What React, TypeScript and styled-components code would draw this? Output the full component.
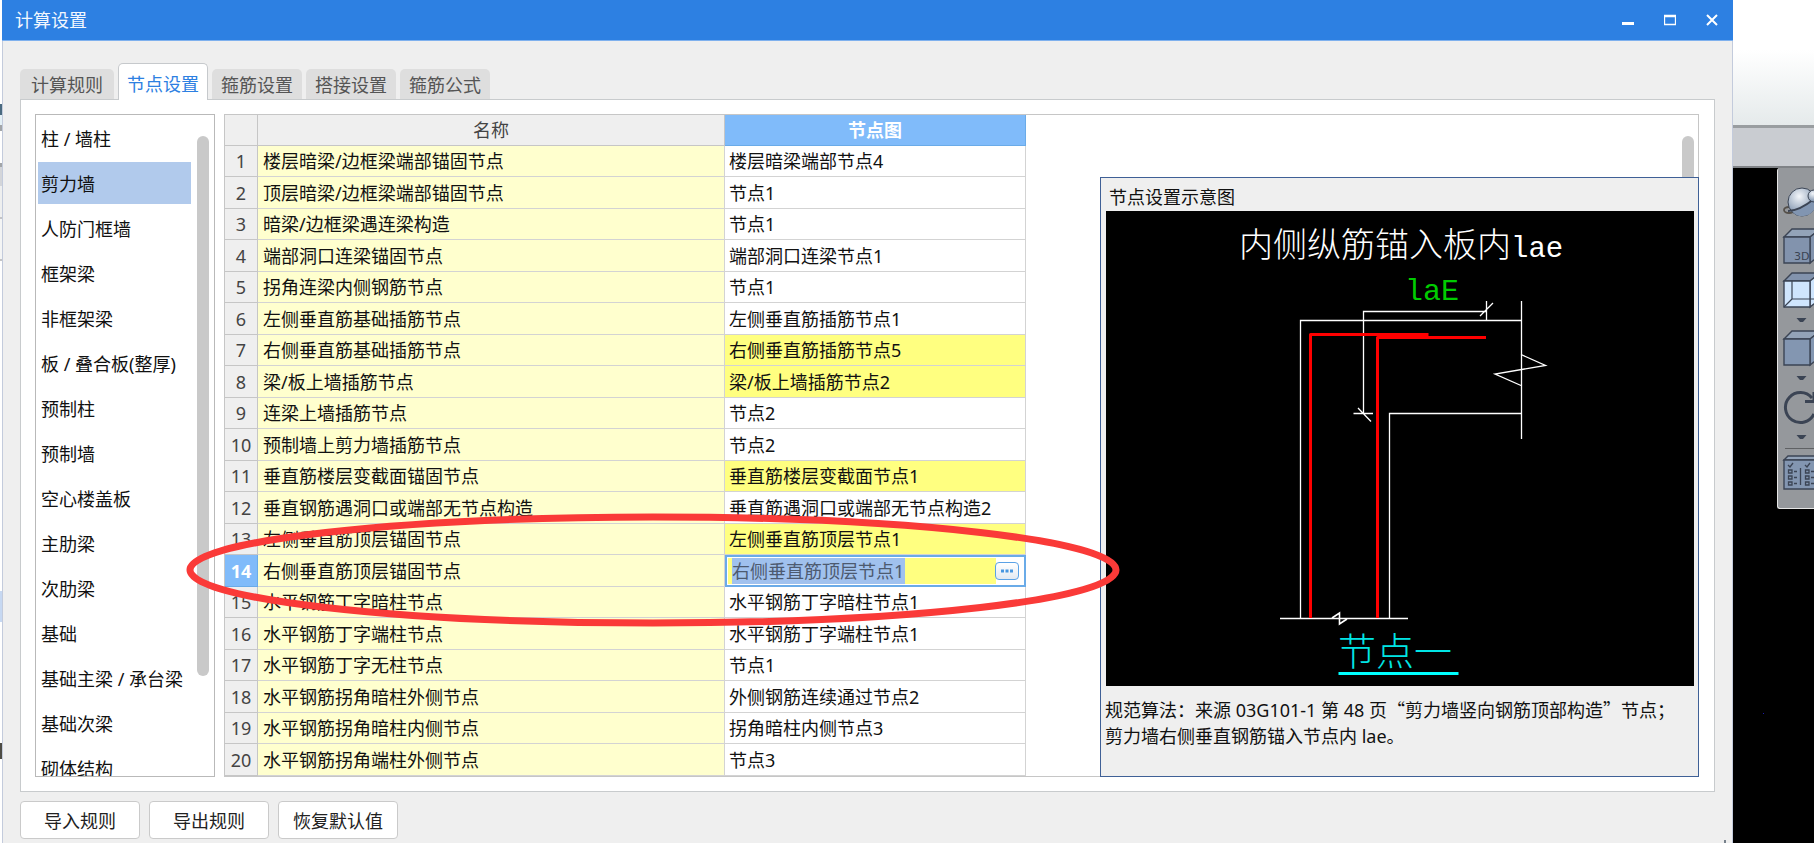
import React from "react";
import styled, { createGlobalStyle } from "styled-components";

const GlobalStyle = createGlobalStyle`
  *, *::before, *::after { box-sizing: border-box; }
  body {
    margin: 0;
    background: #000;
    color: #111;
    font: 18px/26px "Noto Sans", "Noto Sans CJK SC", sans-serif;
  }
  button, input { font: inherit; color: inherit; margin: 0; padding: 0; }
`;

const Desktop = styled.div`
  display: flex;
  min-height: 100vh;
  overflow: hidden;
`;

/* Sliver of the main window left of the dialog */
const LeftSliver = styled.div`
  flex: none;
  width: 2px;
  background: linear-gradient(
    #fff 0 104px, #4a6a80 104px 115px, #e4f0f6 115px 125px, #a2a5a8 125px 131px,
    #fff 131px 163px, #a2a5a8 163px 167px, #d3d5d9 167px 186px, #eeefef 186px 217px,
    #c4c4c6 217px 219px, #f4f5f5 219px 259px, #c4c4c6 259px 261px, #fff 261px 591px,
    #c6d8f2 591px 622px, #fff 622px 743px, #4d4c45 743px 759px, #fff 759px
  );
`;

const Dialog = styled.main`
  position: relative;
  flex: 1;
  min-width: 0;
  display: flex;
  flex-direction: column;
  background: #efefef;
`;

const TitleBar = styled.header`
  display: flex;
  justify-content: space-between;
  height: 41px;
  padding-left: 13px;
  background: #2d80e2;
  border-bottom: 1px solid #7fb1ee;
`;

const Title = styled.h1`
  margin: 0;
  font-size: 18px;
  font-weight: 400;
  line-height: 40px;
  color: #f2f7fe;
`;

const WindowButtons = styled.div`
  display: flex;
`;

const WindowButton = styled.button`
  display: grid;
  place-items: center;
  width: 42px;
  height: 40px;
  border: 0;
  background: none;
`;

const DialogBody = styled.div`
  flex: 1;
  padding: 22px 17px 4px;
  border: solid #c3cbdc;
  border-width: 0 1px;
`;

const TabBar = styled.div`
  display: flex;
  align-items: flex-end;
  gap: 4px;
`;

const Tab = styled.button<{ $active?: boolean }>`
  position: relative;
  height: ${(p) => (p.$active ? 37 : 30)}px;
  margin-bottom: ${(p) => (p.$active ? -1 : 0)}px;
  padding: ${(p) => (p.$active ? "4px 8px 0" : "2px 9px 0")};
  border: ${(p) => (p.$active ? "1px solid #c6c9cc" : "0")};
  border-bottom: 0;
  border-radius: 5px 5px 0 0;
  background: ${(p) => (p.$active ? "#fff" : "#dedede")};
  color: ${(p) => (p.$active ? "#2d80e2" : "#555")};

  &:first-child {
    padding: 2px 11px 0;
  }
`;

const TabPanel = styled.section`
  display: flex;
  gap: 9px;
  padding: 14px 15px 14px 14px;
  background: #fff;
  border: 1px solid #c8cbcd;
`;

const Sidebar = styled.nav`
  contain: size;
  display: flex;
  justify-content: space-between;
  flex: none;
  width: 180px;
  border: 1px solid #b9b9b9;
  overflow: hidden;
`;

const CategoryList = styled.ul`
  flex: 1;
  display: flex;
  flex-direction: column;
  gap: 3px;
  margin: 0;
  padding: 2px 3px 0 2px;
  list-style: none;
`;

const Category = styled.button<{ $selected?: boolean }>`
  display: block;
  width: 153px;
  height: 42px;
  padding: 1px 0 0 3px;
  border: 0;
  background: ${(p) => (p.$selected ? "#b1caec" : "none")};
  text-align: left;
  white-space: nowrap;
`;

const SidebarThumb = styled.div`
  flex: none;
  width: 12px;
  height: 540px;
  margin: 21px 5px 0 0;
  border-radius: 6px;
  background: #c9c9c9;
`;

const TableFrame = styled.div`
  position: relative;
  flex: 1;
  min-width: 0;
  display: flex;
  justify-content: space-between;
  border: 1px solid #c6c6c6;
`;

const TableThumb = styled.div`
  width: 12px;
  margin: 21px 4px 0 0;
  border-radius: 6px;
  background: #c9c9c9;
`;

const NodeTable = styled.table`
  flex: none;
  width: 801px;
  table-layout: fixed;
  border-collapse: separate;
  border-spacing: 0;
`;

const Col = styled.col<{ $width: number }>`
  width: ${(p) => p.$width}px;
`;

const HeadCell = styled.th<{ $current?: boolean }>`
  height: 31px;
  padding: 0;
  border: solid ${(p) => (p.$current ? "#6aabe8" : "#c6c6c6")};
  border-width: 0 1px 1px 0;
  background: ${(p) => (p.$current ? "#80bbfa" : "#efefef")};
  color: ${(p) => (p.$current ? "#fff" : "#444")};
  font-weight: ${(p) => (p.$current ? 700 : 400)};
`;

const Row = styled.tr`
  height: 31px;
  &:nth-child(even) { height: 32px; }
`;

const RowNumber = styled(HeadCell)`
  height: auto;
`;

const NameCell = styled.td`
  padding: 0 0 0 5px;
  border: solid #d3d3d3;
  border-width: 0 1px 1px 0;
  background: #ffffce;
  white-space: nowrap;
`;

const NodeCell = styled(NameCell)<{ $changed?: boolean }>`
  padding-left: 4px;
  background: ${(p) => (p.$changed ? "#ffff80" : "#fff")};
`;

const EditCell = styled.td`
  padding: 0;
`;

const Editor = styled.div`
  display: flex;
  align-items: center;
  height: 32px;
  padding-left: 5px;
  border: 2px solid #6aabe8;
  background: linear-gradient(to left, #fff 28px, #ffff80 28px);
  box-shadow: inset 0 0 0 1px #fff;
`;

const EditorInput = styled.input`
  width: 173px;
  height: 26px;
  border: 0;
  border-radius: 0;
  background: #a0c1ee;
  color: #4d5a70;
  outline: none;
`;

const MoreButton = styled.button`
  display: grid;
  place-items: center;
  width: 24px;
  height: 18px;
  margin-left: auto;
  margin-right: 5px;
  border: 1px solid #5aa2e6;
  border-radius: 4px;
  background: linear-gradient(#fff, #e2e9f2);
`;

const Preview = styled.aside`
  position: absolute;
  top: 62px;
  right: -1px;
  bottom: -1px;
  width: 599px;
  padding: 6px 4px 0;
  border: 1px solid #3f6096;
  background: #efefef;
`;

const PreviewTitle = styled.h2`
  margin: 0;
  padding: 0 4px;
  font-size: 18px;
  font-weight: 400;
  line-height: 27px;
`;

const Drawing = styled.svg`
  display: block;
  width: 588px;
  height: 475px;
  margin-left: 1px;
  background: #000;
  font-family: "Noto Sans CJK SC", sans-serif;
`;

const PreviewNote = styled.p`
  margin: 10px 0 0;
  white-space: nowrap;
`;

/* Full-width quotation marks come from the Chinese face */
const Quoted = styled.span`
  font-family: "Noto Sans CJK SC", sans-serif;
`;

const Footer = styled.footer`
  display: flex;
  gap: 9px;
  margin-top: 9px;
`;

const FooterButton = styled.button`
  width: 120px;
  height: 38px;
  padding-top: 1px;
  border: 1px solid #cacaca;
  border-radius: 4px;
  background: #fff;
  color: #222;
`;

const Marker = styled.svg`
  position: absolute;
  top: 510px;
  left: 181px;
  pointer-events: none;
`;

const Grip = styled.i`
  position: absolute;
  right: 7px;
  bottom: 0;
  width: 2px;
  height: 3px;
  background: #77818c;
`;

/* Part of the modelling window right of the dialog */
const Modeller = styled.div`
  flex: none;
  display: flex;
  flex-direction: column;
  width: 81px;
`;

const Ribbon = styled.div`
  height: 128px;
  background: linear-gradient(#fff 50px, #e5eaeb 125px);
  border-bottom: 3px solid #999da0;
`;

const RibbonFooter = styled.div`
  height: 40px;
  background: #c9ccd1;
  border-bottom: 2px solid #7f8286;
`;

const Viewport = styled.div`
  position: relative;
  flex: 1;
  display: flex;
  justify-content: flex-end;
  align-items: flex-start;
  background: #000;
`;

const CursorDot = styled.i`
  position: absolute;
  left: 30px;
  top: 545px;
  width: 1px;
  height: 1px;
  background: #1a1ab0;
`;

const ViewTools = styled.div`
  display: flex;
  flex-direction: column;
  width: 37px;
  border-left: 1px solid #e6e6e6;
  border-bottom: 1px solid #e6e6e6;
  border-radius: 3px 0 0 3px;
  background: #95989c;
`;

const ToolButton = styled.button`
  display: block;
  border: 0;
  background: none;
  line-height: 0;
`;

const categories = [
  "柱 / 墙柱", "剪力墙", "人防门框墙", "框架梁", "非框架梁", "板 / 叠合板(整厚)", "预制柱", "预制墙",
  "空心楼盖板", "主肋梁", "次肋梁", "基础", "基础主梁 / 承台梁", "基础次梁", "砌体结构",
];

type NodeRow = { name: string; node: string; changed?: boolean; editing?: boolean };

const rows: NodeRow[] = [
  { name: "楼层暗梁/边框梁端部锚固节点", node: "楼层暗梁端部节点4" },
  { name: "顶层暗梁/边框梁端部锚固节点", node: "节点1" },
  { name: "暗梁/边框梁遇连梁构造", node: "节点1" },
  { name: "端部洞口连梁锚固节点", node: "端部洞口连梁节点1" },
  { name: "拐角连梁内侧钢筋节点", node: "节点1" },
  { name: "左侧垂直筋基础插筋节点", node: "左侧垂直筋插筋节点1" },
  { name: "右侧垂直筋基础插筋节点", node: "右侧垂直筋插筋节点5", changed: true },
  { name: "梁/板上墙插筋节点", node: "梁/板上墙插筋节点2", changed: true },
  { name: "连梁上墙插筋节点", node: "节点2" },
  { name: "预制墙上剪力墙插筋节点", node: "节点2" },
  { name: "垂直筋楼层变截面锚固节点", node: "垂直筋楼层变截面节点1", changed: true },
  { name: "垂直钢筋遇洞口或端部无节点构造", node: "垂直筋遇洞口或端部无节点构造2" },
  { name: "左侧垂直筋顶层锚固节点", node: "左侧垂直筋顶层节点1", changed: true },
  { name: "右侧垂直筋顶层锚固节点", node: "右侧垂直筋顶层节点1", editing: true },
  { name: "水平钢筋丁字暗柱节点", node: "水平钢筋丁字暗柱节点1" },
  { name: "水平钢筋丁字端柱节点", node: "水平钢筋丁字端柱节点1" },
  { name: "水平钢筋丁字无柱节点", node: "节点1" },
  { name: "水平钢筋拐角暗柱外侧节点", node: "外侧钢筋连续通过节点2" },
  { name: "水平钢筋拐角暗柱内侧节点", node: "拐角暗柱内侧节点3" },
  { name: "水平钢筋拐角端柱外侧节点", node: "节点3" },
];

const tabs = ["计算规则", "节点设置", "箍筋设置", "搭接设置", "箍筋公式"];

const NodeDrawing = () => (
  <Drawing viewBox="0 0 588 475" role="img" aria-label="节点一">
    <g fill="none" stroke="#fff" strokeWidth="1.3">
      <path d="M194.5 407V109.5H415" />
      <path d="M415.5 90V228" />
      <path d="M415 143.5L439.5 154.5L389 163L415 174.5" />
      <path d="M415 202.5H283.5V407" />
      <path d="M257.5 202V100.5H380M380.5 90V109M374 105L387 92" />
      <path d="M247.5 202.5H267M252 197L265 210.5" />
      <path d="M174 407.5H302" />
      <path d="M226 407L233.5 402V413L241 408" strokeWidth="1.6" />
    </g>
    <g fill="none" stroke="#f00" strokeWidth="3" strokeLinejoin="round">
      <path d="M204.5 407V123.5H322.5" />
      <path d="M271.5 407V126.5H380" />
    </g>
    <text x="133" y="46" fill="#fff" fontSize="34" fontWeight="300">
      内侧纵筋锚入板内
      <tspan fontFamily="Liberation Mono" fontSize="29">lae</tspan>
    </text>
    <text x="299" y="89" fill="#00cc00" fontFamily="Liberation Mono" fontSize="30">laE</text>
    <text x="232" y="454" fill="#00e5e5" fontSize="38" fontWeight="300">节点一</text>
    <path d="M232.5 462.5H352.5" stroke="#00ffff" strokeWidth="3" />
  </Drawing>
);

const LINE = "#3b4454";

const Cube = ({ y, fill, top }: { y: number; fill: string; top: string }) => (
  <g stroke={LINE} strokeWidth="1.4">
    <path d={`M6 ${y}L14 ${y - 8}H42L32 ${y}Z`} fill={top} />
    <path d={`M32 ${y}L42 ${y - 8}V${y + 18}L32 ${y + 26}Z`} fill={fill} />
    <path d={`M6 ${y}H32V${y + 26}H6Z`} fill={fill} />
  </g>
);

const Tool = ({ label, y, h, children }: { label: string; y: number; h: number; children: React.ReactNode }) => (
  <ToolButton type="button" aria-label={label}>
    <svg width="36" height={h} viewBox={`0 ${y} 36 ${h}`} aria-hidden="true">
      {children}
    </svg>
  </ToolButton>
);

const Arrow = ({ y }: { y: number }) => <path d={`M18.5 ${y}H28.5L25 ${y + 4}H22Z`} fill={LINE} />;

const ViewToolbar = () => (
  <ViewTools role="toolbar" aria-label="视图">
    <Tool label="动态观察" y={0} h={56}>
      <defs>
        <radialGradient id="orb" cx="0.4" cy="0.3" r="0.7">
          <stop offset="0" stopColor="#f3f6fa" />
          <stop offset="0.6" stopColor="#a9b7c9" />
          <stop offset="1" stopColor="#7488a5" />
        </radialGradient>
      </defs>
      <ellipse cx="11" cy="42" rx="5" ry="3" fill="none" stroke="#55504a" strokeWidth="1.8" />
      <circle cx="24" cy="34" r="14" fill="url(#orb)" stroke={LINE} strokeWidth="1" />
      <path d="M15 44.5L37 31V40C32 50 20 50 15 44.5Z" fill="#8195b1" />
      <path d="M10 43C18 43 26 39 36 31" fill="none" stroke={LINE} strokeWidth="1.8" />
      <circle cx="36" cy="28" r="6" fill="url(#orb)" stroke={LINE} strokeWidth="1" />
    </Tool>
    <Tool label="三维" y={56} h={44}>
      <Cube y={69} fill="#8293ad" top="#93a3b8" />
      <text x="16" y="92" fontSize="11" fontFamily="DejaVu Sans" fill={LINE} stroke="none">3D</text>
    </Tool>
    <Tool label="线框" y={100} h={45}>
      <Cube y={113} fill="#cfe5fd" top="#8293ad" />
      <path d="M14 113V131H36M6 139L14 131" fill="none" stroke={LINE} strokeWidth="1.2" />
    </Tool>
    <Tool label="线框选项" y={145} h={15}><Arrow y={150} /></Tool>
    <Tool label="实体" y={160} h={42}><Cube y={171} fill="#8396b1" top="#93a3b8" /></Tool>
    <Tool label="实体选项" y={202} h={16}><Arrow y={208} /></Tool>
    <Tool label="旋转" y={218} h={42}>
      <path d="M36 246A15 15 0 1 1 34 230" fill="none" stroke={LINE} strokeWidth="3" />
      <path d="M27 233.5H36V224" fill="none" stroke={LINE} strokeWidth="3" />
    </Tool>
    <Tool label="旋转选项" y={260} h={15}><Arrow y={267} /></Tool>
    <svg width="36" height="10" viewBox="0 275 36 10" aria-hidden="true">
      <path d="M7 280.5H36" stroke="#5f6164" />
    </svg>
    <Tool label="显示设置" y={285} h={55}>
      <path d="M6 292L10 288H40V292Z" fill="#93a3b8" stroke={LINE} strokeWidth="1.4" />
      <path d="M6 292H40V321H6Z" fill="#8396b1" stroke={LINE} strokeWidth="1.4" />
      <g fill="none" stroke={LINE} strokeWidth="1.3">
        <path d="M10 297L12 299L15 295M27 297L29 299L32 295M22.5 300V317" />
        {[302, 308, 314].map((y) => (
          <path key={y} d={`M10.5 ${y}h3.5v3h-3.5zM16 ${y + 1.5}h3M27.5 ${y}h3.5v3h-3.5zM33 ${y + 1.5}h3`} />
        ))}
      </g>
    </Tool>
  </ViewTools>
);

export default function App() {
  return (
    <>
      <GlobalStyle />
      <Desktop>
        <LeftSliver />
        <Dialog>
          <TitleBar>
            <Title>计算设置</Title>
            <WindowButtons>
              <WindowButton type="button" aria-label="最小化">
                <svg width="12" height="12"><path d="M0 9.5H12" stroke="#fff" strokeWidth="3" /></svg>
              </WindowButton>
              <WindowButton type="button" aria-label="最大化">
                <svg width="12" height="12">
                  <path d="M0.5 1.5H11.5V10.5H0.5ZM0 2.5H12" fill="none" stroke="#fff" strokeWidth="1.3" />
                </svg>
              </WindowButton>
              <WindowButton type="button" aria-label="关闭">
                <svg width="12" height="12"><path d="M1 1L11 11M11 1L1 11" stroke="#fff" strokeWidth="2" /></svg>
              </WindowButton>
            </WindowButtons>
          </TitleBar>
          <DialogBody>
            <TabBar role="tablist">
              {tabs.map((t) => (
                <Tab key={t} type="button" role="tab" aria-selected={t === "节点设置"} $active={t === "节点设置"}>
                  {t}
                </Tab>
              ))}
            </TabBar>
            <TabPanel role="tabpanel">
              <Sidebar aria-label="构件类型">
                <CategoryList>
                  {categories.map((c) => (
                    <li key={c}>
                      <Category type="button" $selected={c === "剪力墙"}>{c}</Category>
                    </li>
                  ))}
                </CategoryList>
                <SidebarThumb />
              </Sidebar>
              <TableFrame>
                <NodeTable>
                  <colgroup>
                    <Col $width={33} />
                    <Col $width={467} />
                    <Col $width={301} />
                  </colgroup>
                  <thead>
                    <tr>
                      <HeadCell />
                      <HeadCell scope="col">名称</HeadCell>
                      <HeadCell scope="col" $current>节点图</HeadCell>
                    </tr>
                  </thead>
                  <tbody>
                    {rows.map((r, i) => (
                      <Row key={r.name}>
                        <RowNumber scope="row" $current={r.editing}>{i + 1}</RowNumber>
                        <NameCell>{r.name}</NameCell>
                        {r.editing ? (
                          <EditCell>
                            <Editor>
                              <EditorInput type="text" aria-label={r.name} defaultValue={r.node} />
                              <MoreButton type="button" aria-label="选择节点">
                                <svg width="14" height="4">
                                  <path d="M1 0.5h3v3h-3zM5.5 0.5h3v3h-3zM10 0.5h3v3h-3z" fill="#4796e0" />
                                </svg>
                              </MoreButton>
                            </Editor>
                          </EditCell>
                        ) : (
                          <NodeCell $changed={r.changed}>{r.node}</NodeCell>
                        )}
                      </Row>
                    ))}
                  </tbody>
                </NodeTable>
                <TableThumb />
                <Preview>
                  <PreviewTitle>节点设置示意图</PreviewTitle>
                  <NodeDrawing />
                  <PreviewNote>
                    规范算法：来源 03G101-1 第 48 页<Quoted>“剪力墙竖向钢筋顶部构造”</Quoted>节点；
                    <br />
                    剪力墙右侧垂直钢筋锚入节点内 lae。
                  </PreviewNote>
                </Preview>
              </TableFrame>
            </TabPanel>
            <Footer>
              <FooterButton type="button">导入规则</FooterButton>
              <FooterButton type="button">导出规则</FooterButton>
              <FooterButton type="button">恢复默认值</FooterButton>
            </Footer>
          </DialogBody>
          <Marker width="944" height="122" aria-hidden="true">
            <ellipse cx="470" cy="60" rx="463" ry="53" fill="none" stroke="#fa3a38" strokeWidth="7" />
          </Marker>
          <Grip />
        </Dialog>
        <Modeller>
          <Ribbon />
          <RibbonFooter />
          <Viewport>
            <ViewToolbar />
            <CursorDot />
          </Viewport>
        </Modeller>
      </Desktop>
    </>
  );
}
